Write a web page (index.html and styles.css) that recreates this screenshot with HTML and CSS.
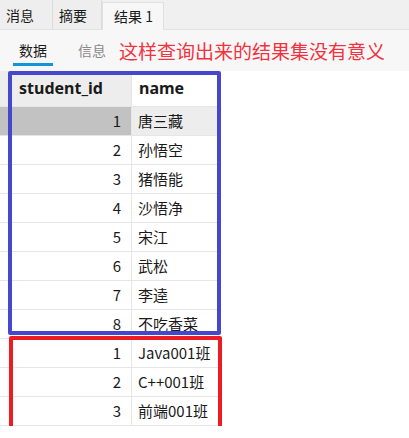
FILE: index.html
```html
<!DOCTYPE html>
<html>
<head>
<meta charset="utf-8">
<link rel="stylesheet" href="styles.css">
</head>
<body>
<div class="tabs">
  <div class="tab">消息</div>
  <div class="tab">摘要</div>
  <div class="tab active">结果 1</div>
</div>
<div class="subtabs">
  <div class="sub on">数据</div>
  <div class="sub off">信息</div>
  <div class="note">这样查询出来的结果集没有意义</div>
</div>
<div class="grid">
  <div class="row head">
    <div class="c1">student_id</div>
    <div class="c2">name</div>
  </div>
  <div class="row sel"><div class="c1">1</div><div class="c2">唐三藏</div></div>
  <div class="row"><div class="c1">2</div><div class="c2">孙悟空</div></div>
  <div class="row"><div class="c1">3</div><div class="c2">猪悟能</div></div>
  <div class="row"><div class="c1">4</div><div class="c2">沙悟净</div></div>
  <div class="row"><div class="c1">5</div><div class="c2">宋江</div></div>
  <div class="row"><div class="c1">6</div><div class="c2">武松</div></div>
  <div class="row"><div class="c1">7</div><div class="c2">李逵</div></div>
  <div class="row"><div class="c1">8</div><div class="c2">不吃香菜</div></div>
  <div class="row"><div class="c1">1</div><div class="c2">Java001班</div></div>
  <div class="row"><div class="c1">2</div><div class="c2">C++001班</div></div>
  <div class="row"><div class="c1">3</div><div class="c2">前端001班</div></div>
  <div class="box blue"></div>
  <div class="box red"></div>
</div>
</body>
</html>
```
FILE: styles.css
```css
html, body {
  margin: 0;
  padding: 0;
  background: #ffffff;
  font-family: "Noto Sans CJK SC", "Noto Sans", sans-serif;
  color: #1a1a1a;
}
.tabs {
  display: flex;
  background: #f0f0f0;
  border-bottom: 1px solid #e2e2e2;
  box-sizing: border-box;
  height: 30px;
}
.tab {
  box-sizing: border-box;
  height: 29px;
  padding: 0 6px;
  font-size: 14px;
  line-height: 30px;
  border-right: 1px solid #dcdcdc;
  background: #eeeeee;
}
.tab:nth-child(1) { width: 53px; }
.tab:nth-child(2) { width: 49px; }
.tab.active {
  width: 62px;
  background: #f7f7f7;
  border: 1px solid #e0e0e0;
  border-bottom: none;
  margin-top: 2px;
  height: 28px;
  line-height: 27px;
  padding-left: 11px;
}
.subtabs {
  display: flex;
  align-items: center;
  height: 41px;
  background: #f7f7f7;
  box-sizing: border-box;
  padding-left: 13px;
}
.sub {
  font-size: 14px;
  position: relative;
  height: 41px;
  line-height: 41px;
  box-sizing: border-box;
}
.sub.on {
  width: 40px;
  text-align: center;
  color: #1a1a1a;
}
.sub.on::after {
  content: "";
  position: absolute;
  left: 0;
  right: 0;
  top: 33px;
  height: 3px;
  background: #1296db;
}
.sub.off {
  margin-left: 25px;
  color: #8a8a8a;
}
.note {
  margin-left: 13px;
  font-size: 19px;
  color: #f2323f;
  line-height: 41px;
  white-space: nowrap;
}
.grid {
  position: relative;
}
.row {
  display: flex;
  height: 29px;
  box-sizing: border-box;
  font-size: 15px;
}
.row > div {
  box-sizing: border-box;
  border-bottom: 1px solid #e6e6e6;
  border-right: 1px solid #e6e6e6;
  line-height: 28px;
  white-space: nowrap;
}
.c1 {
  width: 132px;
  text-align: right;
  padding-right: 10px;
}
.c2 {
  width: 87px;
  padding-left: 6px;
}
.row.head {
  height: 36px;
}
.row.head > div {
  line-height: 35px;
  font-weight: bold;
  font-family: "Noto Sans", "Noto Sans CJK SC", sans-serif;
  font-size: 16px;
}
.row.head .c1 {
  text-align: left;
  padding-left: 19px;
  background: #ededed;
}
.row.head .c2 {
  padding-left: 7px;
}
.row.sel .c1 { background: #c2c2c2; }
.row.sel .c2 { background: #ededed; }
.box {
  position: absolute;
  box-sizing: border-box;
  border: 4px solid;
  border-radius: 2px;
}
.box.blue {
  border-color: #4747cc;
  left: 8px;
  top: 0px;
  width: 213px;
  height: 264px;
}
.box.red {
  border-color: #ed1c24;
  left: 9px;
  top: 265px;
  width: 213px;
  height: 94px;
}
```
